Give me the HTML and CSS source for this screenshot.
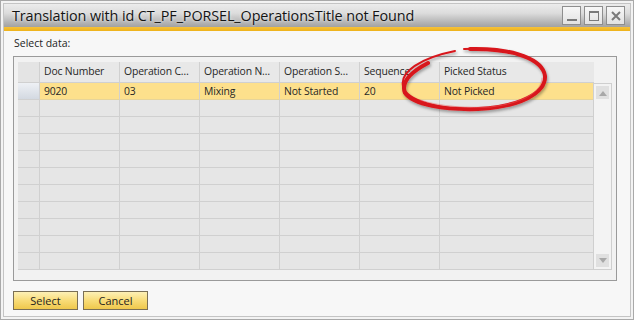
FILE: index.html
```html
<!DOCTYPE html>
<html>
<head>
<meta charset="utf-8">
<link rel="stylesheet" href="styles.css">
</head>
<body>
<div class="window">
  <div class="inner">
    <div class="titlebar">
      <span class="title">Translation with id CT_PF_PORSEL_OperationsTitle not Found</span>
      <div class="tbtns">
        <span class="tbtn"><svg width="16" height="16" viewBox="0 0 16 16"><rect x="3" y="11" width="10" height="2" fill="#7a7a7a"/></svg></span>
        <span class="tbtn"><svg width="16" height="16" viewBox="0 0 16 16"><rect x="3.5" y="3.5" width="9" height="9" fill="none" stroke="#7a7a7a" stroke-width="1"/><rect x="3.5" y="3.5" width="9" height="1.5" fill="#7a7a7a"/></svg></span>
        <span class="tbtn"><svg width="16" height="16" viewBox="0 0 16 16"><path d="M4 4 L12 12 M12 4 L4 12" stroke="#7a7a7a" stroke-width="2"/></svg></span>
      </div>
    </div>
    <div class="stripe"></div>
    <div class="content">
      <div class="label">Select data:</div>
      <div class="frame">
        <div class="grid">
          <div class="row head">
            <div class="c sel"></div><div class="c">Doc Number</div><div class="c">Operation C…</div><div class="c">Operation N…</div><div class="c">Operation S…</div><div class="c">Sequence</div><div class="c wide">Picked Status</div>
          </div>
          <div class="row data">
            <div class="c sel"></div><div class="c">9020</div><div class="c">03</div><div class="c">Mixing</div><div class="c">Not Started</div><div class="c">20</div><div class="c wide">Not Picked</div>
          </div>
          <div class="row"><div class="c sel"></div><div class="c"></div><div class="c"></div><div class="c"></div><div class="c"></div><div class="c"></div><div class="c wide"></div></div>
          <div class="row"><div class="c sel"></div><div class="c"></div><div class="c"></div><div class="c"></div><div class="c"></div><div class="c"></div><div class="c wide"></div></div>
          <div class="row"><div class="c sel"></div><div class="c"></div><div class="c"></div><div class="c"></div><div class="c"></div><div class="c"></div><div class="c wide"></div></div>
          <div class="row"><div class="c sel"></div><div class="c"></div><div class="c"></div><div class="c"></div><div class="c"></div><div class="c"></div><div class="c wide"></div></div>
          <div class="row"><div class="c sel"></div><div class="c"></div><div class="c"></div><div class="c"></div><div class="c"></div><div class="c"></div><div class="c wide"></div></div>
          <div class="row"><div class="c sel"></div><div class="c"></div><div class="c"></div><div class="c"></div><div class="c"></div><div class="c"></div><div class="c wide"></div></div>
          <div class="row"><div class="c sel"></div><div class="c"></div><div class="c"></div><div class="c"></div><div class="c"></div><div class="c"></div><div class="c wide"></div></div>
          <div class="row"><div class="c sel"></div><div class="c"></div><div class="c"></div><div class="c"></div><div class="c"></div><div class="c"></div><div class="c wide"></div></div>
          <div class="row"><div class="c sel"></div><div class="c"></div><div class="c"></div><div class="c"></div><div class="c"></div><div class="c"></div><div class="c wide"></div></div>
          <div class="row"><div class="c sel"></div><div class="c"></div><div class="c"></div><div class="c"></div><div class="c"></div><div class="c"></div><div class="c wide"></div></div>
        </div>
        <div class="scroll">
          <span class="sbtn"><svg width="10" height="6" viewBox="0 0 10 6"><path d="M1 6 L5 1 L9 6 Z" fill="#a8a8a8"/></svg></span>
          <span class="sbtn"><svg width="10" height="6" viewBox="0 0 10 6"><path d="M1 0 L5 5 L9 0 Z" fill="#a8a8a8"/></svg></span>
        </div>
      </div>
      <div class="buttons">
        <button class="btn">Select</button>
        <button class="btn">Cancel</button>
      </div>
    </div>
  </div>
  <svg class="mark" width="634" height="320" viewBox="0 0 634 320">
    <defs>
      <filter id="sh" x="-20%" y="-20%" width="140%" height="160%">
        <feDropShadow dx="1" dy="2" stdDeviation="1.5" flood-color="#000" flood-opacity="0.35"/>
      </filter>
    </defs>
    <g filter="url(#sh)" fill="none" stroke-linecap="round">
      <path d="M455 51 C420 58, 400 72, 403 86 C406 101, 440 110, 478 109 C520 107, 546 93, 545 76 C543 58, 510 47, 464 49" stroke="#d8171c" stroke-width="2"/>
      <path d="M428 63 C409 73, 401 83, 405 93 C413 105, 445 110, 478 109 C520 107, 546 93, 545 76 C543 60, 515 48, 470 49" stroke="#d8171c" stroke-width="4"/>
      <path d="M420 100 C440 107, 470 108, 490 107 C525 103, 542 91, 542 78" stroke="#f06060" stroke-width="1" opacity="0.5"/>
    </g>
  </svg>
</div>
</body>
</html>
```
FILE: styles.css
```css
* { box-sizing: border-box; }
html, body { margin: 0; padding: 0; background: #ffffff; }
body { font-family: "Open Sans", "Noto Sans", sans-serif; color: #222; }

.window {
  position: relative;
  width: 634px;
  height: 320px;
  border: 1px solid #a9a9a9;
  background: #f3f3f3;
  padding: 2px;
}
.inner {
  height: 100%;
  border: 1px solid #c4c4c4;
  background: #f7f7f7;
  display: flex;
  flex-direction: column;
}
.titlebar {
  height: 23px;
  display: flex;
  align-items: center;
  justify-content: space-between;
  background: linear-gradient(#ececec 0%, #dcdcdc 40%, #b4b4b4 80%, #a2a2a2 100%);
  padding: 0 5px 0 8px;
}
.title {
  font-size: 14.4px;
  color: #141414;
  letter-spacing: -0.1px;
  text-shadow: 0 0 3px rgba(255,255,255,0.8);
  white-space: nowrap;
}
.tbtns { display: flex; gap: 3px; align-self: flex-start; margin-top: 2px; }
.tbtn {
  width: 19px;
  height: 19px;
  border: 1px solid #8e8e8e;
  background: linear-gradient(#f7f7f7, #e2e2e2);
  display: flex;
  align-items: center;
  justify-content: center;
}
.stripe {
  height: 4px;
  background: linear-gradient(#f6c23a, #eeb21a);
}
.content {
  flex: 1;
  padding: 0 9px;
  background: #f7f7f7;
}
.label {
  font-size: 10.5px;
  line-height: 14px;
  margin-top: 5px;
  padding-left: 1px;
  color: #1e1e1e;
}
.frame {
  margin-top: 6px;
  width: 604px;
  height: 225px;
  border: 1px solid #9a9a9a;
  background: #f2f2f2;
  padding: 5px 0 0 4px;
  display: flex;
  align-items: flex-start;
}
.grid {
  width: 576px;
  display: flex;
  flex-direction: column;
}
.row { display: flex; height: 17px; }
.row.head { height: 21px; }
.c {
  width: 80px;
  flex: none;
  background: #e6e6e6;
  border-right: 1px solid #d0d0d0;
  border-bottom: 1px solid #d0d0d0;
  font-size: 10.4px;
  letter-spacing: -0.15px;
  line-height: 16px;
  padding-left: 4px;
  white-space: nowrap;
  overflow: hidden;
  color: #262626;
}
.head .c { line-height: 19px; background: #e8e8e8; }
.c.sel { width: 22px; background: #e4e4e4; }
.c.wide { width: 154px; border-right: none; }
.data .c { background: #fde08c; border-bottom-color: #e6d49a; }
.data .c.sel { background: linear-gradient(#eef1f5, #d3d9e1); border-bottom-color: #d0d0d0; }
.scroll {
  margin-top: 21px;
  margin-left: -1px;
  width: 19px;
  height: 187px;
  border: 1px solid #cfcfcf;
  background: #f3f3f3;
  display: flex;
  flex-direction: column;
  justify-content: space-between;
  padding: 2px;
}
.sbtn {
  width: 13px;
  height: 13px;
  background: #e0e0e0;
  display: flex;
  align-items: center;
  justify-content: center;
}
.buttons { display: flex; gap: 5px; margin-top: 10px; padding-left: 0; }
.btn {
  width: 65px;
  height: 19px;
  border: 1px solid #7a6f55;
  background: linear-gradient(#fdf0b6, #f8dc78 50%, #efc84c);
  font-family: "Open Sans", "Noto Sans", sans-serif;
  font-size: 11px;
  color: #1e1e1e;
  padding: 0;
  line-height: 16px;
}
.mark {
  position: absolute;
  left: -1px;
  top: -1px;
  pointer-events: none;
}
```
